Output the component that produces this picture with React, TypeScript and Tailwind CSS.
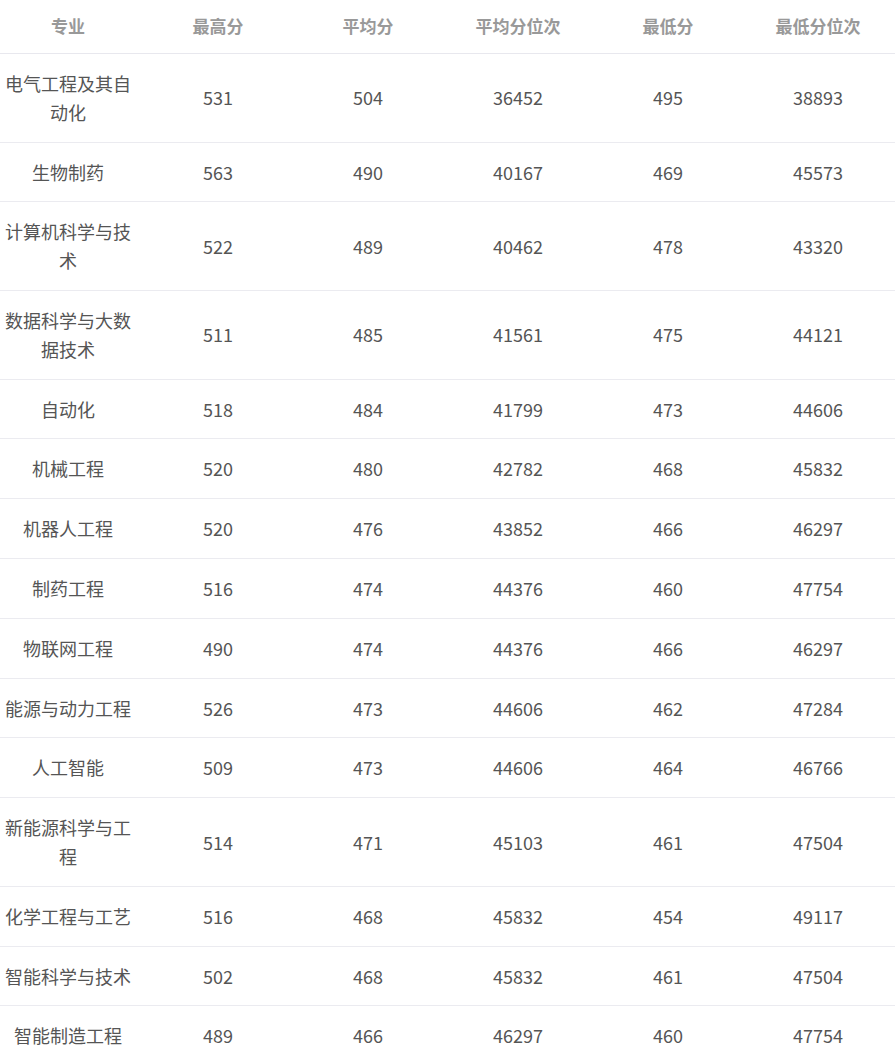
const headers = ["专业", "最高分", "平均分", "平均分位次", "最低分", "最低分位次"];

const rows: string[][] = [
  ["电气工程及其自动化", "531", "504", "36452", "495", "38893"],
  ["生物制药", "563", "490", "40167", "469", "45573"],
  ["计算机科学与技术", "522", "489", "40462", "478", "43320"],
  ["数据科学与大数据技术", "511", "485", "41561", "475", "44121"],
  ["自动化", "518", "484", "41799", "473", "44606"],
  ["机械工程", "520", "480", "42782", "468", "45832"],
  ["机器人工程", "520", "476", "43852", "466", "46297"],
  ["制药工程", "516", "474", "44376", "460", "47754"],
  ["物联网工程", "490", "474", "44376", "466", "46297"],
  ["能源与动力工程", "526", "473", "44606", "462", "47284"],
  ["人工智能", "509", "473", "44606", "464", "46766"],
  ["新能源科学与工程", "514", "471", "45103", "461", "47504"],
  ["化学工程与工艺", "516", "468", "45832", "454", "49117"],
  ["智能科学与技术", "502", "468", "45832", "461", "47504"],
  ["智能制造工程", "489", "466", "46297", "460", "47754"],
];

const font = {
  fontFamily: '"Microsoft YaHei", "Noto Sans CJK SC", "Noto Sans", sans-serif',
};

export default function App() {
  return (
    <div className="w-[895px] overflow-hidden bg-white" style={font}>
      <div className="w-[900px]">
        <div className="grid grid-cols-[repeat(6,150px)] border-b border-[#e8e8ee]">
          {headers.map((h) => (
            <div
              key={h}
              className="pr-[14px] pt-[11px] pb-[12px] text-center text-[17px] font-bold leading-[30px] text-[#999]"
            >
              {h}
            </div>
          ))}
        </div>
        {rows.map((r) => (
          <div
            key={r[0]}
            className="grid grid-cols-[repeat(6,150px)] items-center border-b border-[#ebebf0]"
          >
            {r.map((c, i) => (
              <div
                key={i}
                className="pr-[14px] py-[15px] text-center text-[18px] leading-[28.8px] text-[#555]"
              >
                {c}
              </div>
            ))}
          </div>
        ))}
      </div>
    </div>
  );
}
